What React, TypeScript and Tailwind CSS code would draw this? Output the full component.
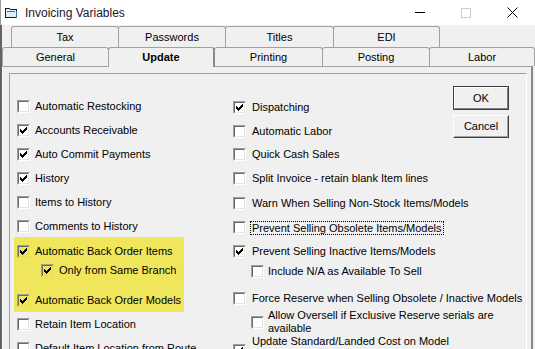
import React from "react";

const font = { fontFamily: '"Liberation Sans", Arial, sans-serif' };

const tickCols = [2, 3, 4, 3, 2, 1, 0];

function Tick() {
  return (
    <svg width="7" height="7" viewBox="0 0 7 7" shapeRendering="crispEdges">
      {tickCols.map((y, x) => (
        <rect key={x} x={x} y={y} width="1" height="3" fill="#000" />
      ))}
    </svg>
  );
}

function Box({ checked, hl }: { checked?: boolean; hl?: boolean }) {
  return (
    <span
      className={`flex h-[13px] w-[13px] shrink-0 border border-[#a0a0a0] ${
        hl ? "border-r-[#f0e65c] border-b-[#f0e65c]" : "border-r-white border-b-white"
      }`}
    >
      <span
        className={`flex flex-1 items-center justify-center border border-[#696969] ${
          hl ? "border-r-[#e6dc55] border-b-[#e6dc55] bg-[#f0e65c]" : "border-r-[#e3e3e3] border-b-[#e3e3e3] bg-white"
        }`}
      >
        {checked && <Tick />}
      </span>
    </span>
  );
}

type RowProps = {
  label: React.ReactNode;
  checked?: boolean;
  hl?: boolean;
  h: string;
  indent?: string;
  gap?: string;
  focus?: boolean;
};

function Row({ label, checked, hl, h, indent = "", gap = "gap-[5px]", focus }: RowProps) {
  return (
    <div className={`flex items-center whitespace-nowrap ${h} ${indent} ${gap}`}>
      <Box checked={checked} hl={hl} />
      {focus ? (
        <span className="-ml-[2px] border border-dotted border-black px-[1px] leading-[12px]">{label}</span>
      ) : (
        <span className="leading-[13px]">{label}</span>
      )}
    </div>
  );
}

function Tab({ label, w, first, selected }: { label: string; w: string; first?: boolean; selected?: boolean }) {
  return (
    <div
      className={`flex items-center justify-center rounded-t-[3px] border-t border-l border-[#a0a0a0] bg-[#f0f0f0] ${w} ${
        first ? "" : "-ml-px"
      } ${selected ? "relative z-10 h-[20px] border-r-2 border-r-[#8a8a8a] font-bold" : "h-full border-r"}`}
    >
      {label}
    </div>
  );
}

function TitleIcon() {
  return (
    <svg width="13" height="12" viewBox="0 0 13 12" shapeRendering="crispEdges">
      <path d="M0.5 1.5h4l1 1h6v8h-11z" fill="#d8eef8" stroke="#1b1b1b" />
      <path d="M2 4.5h8" stroke="#2a7fa8" />
      <path d="M11.5 3.5v7" stroke="#2a7fa8" />
    </svg>
  );
}

export default function App() {
  return (
    <div className="flex h-[349px] w-[535px] flex-col overflow-hidden bg-[#f0f0f0] text-[11px] text-black" style={font}>
      {/* title bar */}
      <div className="flex h-[25px] shrink-0 items-center border-l border-[#9a9a9a] bg-white">
        <div className="ml-[4px] flex items-center">
          <TitleIcon />
        </div>
        <span className="ml-[7px] text-[12px] text-[#1a1530]">Invoicing Variables</span>
        <div className="ml-auto flex h-full">
          <div className="flex w-[46px] items-center justify-center">
            <div className="h-px w-[10px] bg-black" />
          </div>
          <div className="flex w-[46px] items-center justify-center">
            <div className="h-[10px] w-[10px] border border-[#cccccc]" />
          </div>
          <div className="flex w-[46px] items-center justify-center">
            <svg width="11" height="11" viewBox="0 0 11 11">
              <path d="M0.5 0.5l10 10M10.5 0.5l-10 10" stroke="#000" strokeWidth="1" />
            </svg>
          </div>
        </div>
      </div>

      {/* window body */}
      <div className="flex flex-1 flex-col border-l-2 border-[#646464]">
        <div className="flex h-[22px] shrink-0 pl-[9px] pt-[1px]">
          <Tab label="Tax" w="w-[108px]" first />
          <Tab label="Passwords" w="w-[108px]" />
          <Tab label="Titles" w="w-[109px]" />
          <Tab label="EDI" w="w-[107px]" />
        </div>
        <div className="flex h-[19px] shrink-0">
          <Tab label="General" w="w-[107px]" first />
          <Tab label="Update" w="w-[107px]" selected />
          <Tab label="Printing" w="w-[109px]" />
          <Tab label="Posting" w="w-[108px]" />
          <Tab label="Labor" w="flex-1" />
        </div>

        {/* tab panel */}
        <div className="mr-[2px] flex flex-1 flex-col border-t border-l border-[#a0a0a0] border-l-white border-r-2 border-r-[#8a8a8a] pl-[6px] pr-[4px] pt-[6px]">
          <div className="flex flex-1 items-start border border-[#a0a0a0] border-r-white border-b-white">
            {/* left column */}
            <div className="ml-[7px] mt-[20px] flex w-[216px] shrink-0 flex-col">
              <Row label="Automatic Restocking" h="h-[24px]" />
              <Row label="Accounts Receivable" h="h-[24px]" checked />
              <Row label="Auto Commit Payments" h="h-[24px]" checked />
              <Row label="History" h="h-[24px]" checked />
              <Row label="Items to History" h="h-[24px]" />
              <Row label="Comments to History" h="h-[24px]" />
              <div className="-ml-[3px] -mt-px flex w-[170px] flex-col bg-[#f0e65c] pl-[3px] pt-[3px]">
                <Row label="Automatic Back Order Items" h="h-[22px]" checked hl />
                <Row label="Only from Same Branch" h="h-[16px]" indent="pl-[24px]" checked hl />
                <div className="h-[10px]" />
                <Row label="Automatic Back Order Models" h="h-[24px]" checked hl />
              </div>
              <Row label="Retain Item Location" h="h-[24px]" />
              <Row label="Default Item Location from Route" h="h-[24px]" />
            </div>

            {/* right column */}
            <div className="mt-[21px] flex w-[220px] shrink-0 flex-col">
              <Row label="Dispatching" h="h-[24px]" gap="gap-[6px]" checked />
              <Row label="Automatic Labor" h="h-[24px]" gap="gap-[6px]" />
              <Row label="Quick Cash Sales" h="h-[23px]" gap="gap-[6px]" />
              <Row label="Split Invoice - retain blank Item lines" h="h-[25px]" gap="gap-[6px]" />
              <Row label="Warn When Selling Non-Stock Items/Models" h="h-[25px]" gap="gap-[6px]" />
              <Row label="Prevent Selling Obsolete Items/Models" h="h-[23px]" gap="gap-[6px]" focus />
              <Row label="Prevent Selling Inactive Items/Models" h="h-[25px]" gap="gap-[6px]" checked />
              <Row label="Include N/A as Available To Sell" h="h-[15px]" indent="pl-[18px]" gap="gap-[4px]" />
              <div className="h-[9px]" />
              <Row label="Force Reserve when Selling Obsolete / Inactive Models" h="h-[21px]" gap="gap-[6px]" />
              <Row
                label={
                  <>
                    Allow Oversell if Exclusive Reserve serials are
                    <br />
                    available
                  </>
                }
                h="h-[26px]"
                indent="pl-[18px]"
                gap="gap-[4px]"
              />
              <div className="flex items-start gap-[6px] whitespace-nowrap">
                <span className="mt-[9px]">
                  <Box checked />
                </span>
                <span className="leading-[13px]">Update Standard/Landed Cost on Model</span>
              </div>
            </div>

            {/* buttons */}
            <div className="mt-[12px] flex w-[56px] shrink-0 flex-col">
              <button className="flex h-[24px] border border-[#404040] bg-[#f0f0f0] p-0">
                <span className="flex flex-1 items-center justify-center border border-white border-r-[#808080] border-b-[#808080]">
                  OK
                </span>
              </button>
              <button className="mt-[5px] flex h-[23px] border border-white border-r-[#404040] border-b-[#404040] bg-[#f0f0f0] p-0">
                <span className="flex flex-1 items-center justify-center border border-[#f0f0f0] border-r-[#a0a0a0] border-b-[#a0a0a0]">
                  Cancel
                </span>
              </button>
            </div>
          </div>
        </div>
      </div>
    </div>
  );
}
